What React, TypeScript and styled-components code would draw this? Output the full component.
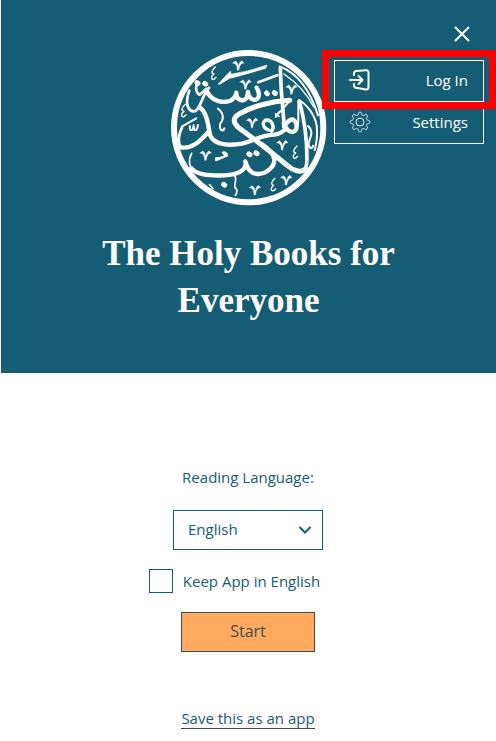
import React from "react";
import styled, { createGlobalStyle } from "styled-components";

const teal = "#155d74";
const ink = "#3f4a50";

const GlobalStyle = createGlobalStyle`
  * { box-sizing: border-box; }
  body {
    margin: 0;
    background: #fff;
    color: ${teal};
    font: 15px/24px "Open Sans", "Noto Sans", sans-serif;
  }
`;

const Header = styled.header`
  position: relative;
  display: flex;
  flex-direction: column;
  align-items: center;
  gap: 22px;
  margin-left: 1px;
  padding: 48px 80px 49px;
  background: ${teal};
  color: #fff;
`;

const Emblem = styled.svg`
  width: 160px;
  height: 160px;
  fill: none;
  stroke: #fff;
  stroke-linecap: round;
  stroke-linejoin: round;
`;

const Title = styled.h1`
  margin: 0;
  font: bold 35px/47px "Liberation Serif", serif;
  text-align: center;
`;

const CloseButton = styled.button`
  position: absolute;
  top: 22px;
  right: 22px;
  display: grid;
  place-items: center;
  width: 24px;
  height: 24px;
  padding: 0;
  border: 0;
  background: none;
  color: #fff;
  cursor: pointer;
`;

const Menu = styled.nav`
  position: absolute;
  top: 60px;
  right: 12px;
  width: 150px;
  background: ${teal};
  border: 1px solid #fff;
`;

const MenuItem = styled.button<{ $divided?: boolean }>`
  position: relative;
  display: flex;
  align-items: center;
  justify-content: space-between;
  width: 100%;
  height: 41px;
  padding: 0 15px 2px 14px;
  border: 0;
  border-bottom: ${(p) => (p.$divided ? "1px solid #fff" : "0")};
  background: none;
  color: #fff;
  font: 500 15px/24px "Open Sans", "Noto Sans", sans-serif;
  cursor: pointer;
`;

const Highlight = styled.span`
  position: absolute;
  inset: -11px -13px -8px;
  border: 7px solid #f00;
  pointer-events: none;
  z-index: 1;
`;

const Form = styled.main`
  display: flex;
  flex-direction: column;
  align-items: center;
  padding: 92px 16px 8px;
`;

const LanguageLabel = styled.label`
  margin-bottom: 21px;
`;

const SelectBox = styled.div`
  display: grid;
  align-items: center;
  width: 150px;
  margin-bottom: 19px;
  svg {
    grid-area: 1 / 1;
    justify-self: end;
    margin-right: 11px;
    pointer-events: none;
  }
`;

const Select = styled.select`
  grid-area: 1 / 1;
  appearance: none;
  width: 100%;
  height: 40px;
  padding: 0 32px 2px 14px;
  border: 1px solid ${teal};
  border-radius: 0;
  background: #fff;
  color: ${teal};
  font: inherit;
`;

const CheckLabel = styled.label`
  display: flex;
  align-items: center;
  gap: 10px;
  margin-right: 27px;
  margin-bottom: 19px;
`;

const Checkbox = styled.input`
  appearance: none;
  width: 24px;
  height: 24px;
  margin: 0;
  border: 1px solid ${teal};
  background: #fff;
  &:checked {
    box-shadow: inset 0 0 0 4px #fff;
    background: ${teal};
  }
`;

const StartButton = styled.button`
  width: 134px;
  height: 40px;
  margin-bottom: 56px;
  padding: 0 0 2px;
  border: 1px solid ${ink};
  background: #ffaa5e;
  color: ${ink};
  font: 500 16px/24px "Open Sans", "Noto Sans", sans-serif;
  cursor: pointer;
`;

const SaveLink = styled.a`
  border-bottom: 1px solid ${ink};
  color: ${teal};
  line-height: 20px;
  text-decoration: none;
`;

const flourishes = [
  [208, 50], [230, 107], [368, 122], [250, 222],
  [110, 320], [340, 289], [258, 424], [352, 394],
];

const hooks = [
  [135, 76], [45, 188], [380, 313], [314, 410],
];

function Calligraphy() {
  return (
    <Emblem viewBox="0 0 480 480" role="img" aria-label="The Holy Books">
      <circle cx="239" cy="239" r="224" strokeWidth="18" />
      <g strokeWidth="8">
        <path d="M61 128C46 168 58 190 75 190C92 190 98 145 120 119" />
        <path d="M84 108C78 120 82 136 92 140L106 128" />
        <path d="M268 103L325 82" />
        <path d="M38 236L82 211" strokeWidth="6" />
        <path d="M39 239C24 270 28 296 42 300" />
        <path d="M68 316C56 337 61 360 76 369" strokeWidth="5" />
        <path d="M299 246C278 239 279 217 293 216C309 216 318 236 308 250" strokeWidth="10" />
      </g>
      <g strokeWidth="13">
        <path d="M112 125C124 158 159 167 184 158Q199 151 202 134C202 158 224 163 234 148L237 132C240 158 262 161 268 148Q273 134 263 119" />
        <path d="M92 178C117 197 117 237 124 263C137 293 184 293 219 287C257 279 267 263 315 260Q338 258 352 240" />
        <path d="M35 298C69 304 92 280 116 254" />
        <path d="M344 225C348 249 375 261 382 242Q386 226 373 215C361 212 354 224 345 236" />
        <path d="M67 361C91 390 181 384 205 375C229 366 232 352 229 340C234 360 245 379 268 378C296 377 317 354 316 334" />
        <path d="M316 334C313 313 296 300 278 288" />
      </g>
      <g strokeWidth="15">
        <path d="M362 157C300 160 244 178 212 197C188 211 192 226 214 243C250 269 312 316 353 351C372 368 396 376 410 363" />
        <path d="M391 160C407 215 414 280 414 335Q414 352 408 364" strokeWidth="11" />
        <path d="M334 60L337 130L345 225" strokeWidth="11" />
      </g>
      <path d="M148 108L172 82L184 70L186 79Q242 70 294 51L290 61Q225 80 182 91L154 108Z" fill="#fff" strokeWidth="2" />
      <g strokeWidth="6">
        <path d="M332 55C391 78 426 134 447 202" />
        <path d="M345 78C389 108 418 145 434 177" strokeWidth="4" />
        <path d="M390 156C414 170 437 200 443 232Q447 269 437 307" />
        <path d="M388 160L388 207Q389 236 377 250" />
        <path d="M365 155L337 188Q323 198 320 207" />
        <path d="M147 182C165 196 165 214 154 226C149 246 162 254 166 241" />
        <path d="M63 234Q60 250 71 245L74 232Q74 251 84 244L87 231" />
        <path d="M197 383C206 395 194 405 198 419C208 424 203 438 199 442" strokeWidth="5" />
        <path d="M417 234C434 249 426 265 419 283C417 300 429 307 432 293" />
        <path d="M122 410L132 422M320 198L330 205" strokeWidth="5" />
      </g>
      <g strokeWidth="15">
        <path d="M84 104L87 106M107 106L110 108M293 135L295 137M316 134L319 136M240 318L243 320M261 315L264 317M164 409L167 411" />
        <path d="M143 337L176 323Q172 309 160 313L168 323Q155 331 140 330L141 338" fill="#fff" strokeWidth="4" />
      </g>
      {flourishes.map(([x, y]) => (
        <path
          key={`${x}-${y}`}
          transform={`translate(${x} ${y})`}
          d="M-17-5L-9-11Q-1-7 0 5Q3-8 10-12L17-5L9-3Q3 3 1 17L-3 17Q-3 1-10-3Z"
          fill="#fff"
          strokeWidth="1"
        />
      ))}
      {hooks.map(([x, y]) => (
        <path
          key={`${x}-${y}`}
          transform={`translate(${x} ${y})`}
          d="M4-19C-8-8-9 0 0 2C-10 9-9 20 0 18L6 12"
          strokeWidth="4"
        />
      ))}
    </Emblem>
  );
}

function LoginIcon() {
  return (
    <svg width="22" height="22" viewBox="0 0 22 22" fill="none" stroke="#fff" strokeWidth="2" strokeLinecap="round" strokeLinejoin="round" aria-hidden="true">
      <path d="M5 6V4.5Q5 2.5 7 2L17 1.3Q19.5 1.2 19.5 3.5V18Q19.5 20.7 17 20.5L7 18.8Q5 18.5 5 16.5V15" />
      <path d="M1 11H13M9.5 7L13.5 11L9.5 15" />
    </svg>
  );
}

function GearIcon() {
  const teeth = 8;
  const points = Array.from({ length: teeth * 12 + 1 }, (_, i) => {
    const a = (i / (teeth * 12)) * Math.PI * 2;
    const r = 8.5 + 1.3 * Math.tanh(2.2 * Math.cos(a * teeth));
    return `${(11 + r * Math.sin(a)).toFixed(2)} ${(11 - r * Math.cos(a)).toFixed(2)}`;
  });
  return (
    <svg width="22" height="22" viewBox="0 0 22 22" fill="none" stroke="#dfeaed" strokeLinejoin="round" aria-hidden="true">
      <path d={`M${points.join("L")}Z`} />
      <circle cx="11" cy="11" r="4" />
    </svg>
  );
}

export default function App() {
  return (
    <>
      <GlobalStyle />
      <Header>
        <Calligraphy />
        <Title>The Holy Books for Everyone</Title>
        <CloseButton aria-label="Close menu">
          <svg width="16" height="16" viewBox="0 0 16 16" stroke="#fff" strokeWidth="2" aria-hidden="true">
            <path d="M1 1L15 15M15 1L1 15" />
          </svg>
        </CloseButton>
        <Menu>
          <MenuItem $divided>
            <LoginIcon />
            Log In
            <Highlight />
          </MenuItem>
          <MenuItem>
            <GearIcon />
            Settings
          </MenuItem>
        </Menu>
      </Header>
      <Form>
        <LanguageLabel htmlFor="language">Reading Language:</LanguageLabel>
        <SelectBox>
          <Select id="language" defaultValue="English">
            <option>English</option>
          </Select>
          <svg width="14" height="10" viewBox="0 0 14 10" fill="none" stroke={teal} strokeWidth="2" aria-hidden="true">
            <path d="M1.5 2L7 7.5L12.5 2" />
          </svg>
        </SelectBox>
        <CheckLabel>
          <Checkbox type="checkbox" />
          Keep App in English
        </CheckLabel>
        <StartButton>Start</StartButton>
        <SaveLink href="#save">Save this as an app</SaveLink>
      </Form>
    </>
  );
}
